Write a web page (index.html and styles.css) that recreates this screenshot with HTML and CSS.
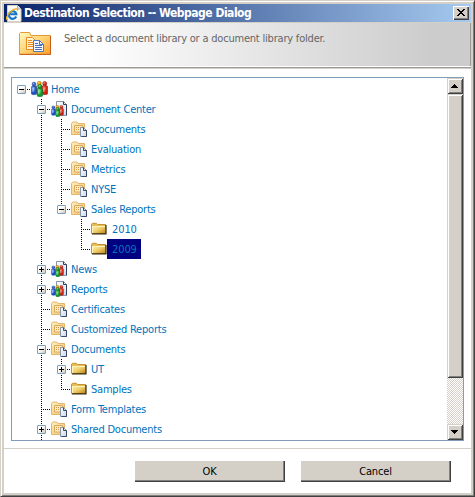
FILE: index.html
```html
<!DOCTYPE html>
<html lang="en">
<head>
<meta charset="utf-8">
<title>Destination Selection -- Webpage Dialog</title>
<link rel="stylesheet" href="styles.css">
</head>
<body>
<svg class="defs" aria-hidden="true">
  <defs>
    <linearGradient id="gold" x1="0" y1="0" x2="1" y2="1"><stop offset="0" stop-color="#fff3b0"/><stop offset=".5" stop-color="#f0cc68"/><stop offset="1" stop-color="#b98116"/></linearGradient>
    <linearGradient id="tan" x1="0" y1="0" x2="1" y2="1"><stop offset="0" stop-color="#fff0bd"/><stop offset="1" stop-color="#efc274"/></linearGradient>
    <linearGradient id="page" x1="0" y1="0" x2="1" y2="1"><stop offset="0" stop-color="#fff"/><stop offset="1" stop-color="#c9d6e8"/></linearGradient>
    <linearGradient id="big" x1="0" y1="0" x2="1" y2="1"><stop offset="0" stop-color="#fff8c0"/><stop offset=".5" stop-color="#ffd477"/><stop offset="1" stop-color="#ff9d29"/></linearGradient>
    <radialGradient id="red" cx=".35" cy=".3"><stop offset="0" stop-color="#ff8b70"/><stop offset="1" stop-color="#cf1f10"/></radialGradient>
    <radialGradient id="green" cx=".35" cy=".3"><stop offset="0" stop-color="#7be68a"/><stop offset="1" stop-color="#109a2c"/></radialGradient>
    <radialGradient id="blue" cx=".35" cy=".3"><stop offset="0" stop-color="#8bb8ff"/><stop offset="1" stop-color="#1f4fc0"/></radialGradient>
    <radialGradient id="yellow" cx=".35" cy=".3"><stop offset="0" stop-color="#ffe76a"/><stop offset="1" stop-color="#dd9a00"/></radialGradient>
  </defs>
  <symbol id="people" viewBox="0 0 17 16">
    <g stroke-width=".6">
      <g fill="url(#yellow)" stroke="#9c7000"><rect x="5.5" y="4" width="5.5" height="9" rx="1.5"/><circle cx="8.2" cy="2.2" r="1.9"/></g>
      <g fill="url(#blue)" stroke="#173a91"><rect x=".4" y="5" width="5.3" height="8.6" rx="1.5"/><circle cx="3" cy="3.1" r="1.9"/></g>
      <g fill="url(#red)" stroke="#8d150b"><rect x="11" y="4.6" width="5.6" height="9" rx="1.5"/><circle cx="13.7" cy="2.5" r="2"/></g>
      <g fill="url(#green)" stroke="#0a681d"><rect x="6.2" y="7.3" width="5.4" height="8.3" rx="1.5"/><circle cx="8.9" cy="5.4" r="2"/></g>
    </g>
    <path d="M2 7v4M7.8 9v4M12.8 7v4" stroke="#fff" stroke-opacity=".45" fill="none"/>
  </symbol>
  <symbol id="site" viewBox="0 0 16 16">
    <path d="M5.5.5h7l3 3v11h-10z" fill="url(#page)" stroke="#8795ab"/>
    <path d="M12.5.5v3h3v10.8" fill="#fff" fill-opacity=".5" stroke="#304060"/>
    <svg x="0" y="4" width="13" height="12" viewBox="0 0 17 16"><use href="#people" width="17" height="16"/></svg>
  </symbol>
  <symbol id="library" viewBox="0 0 16 16">
    <path d="M.5 13.5V2.3L1.8 1h4l1.4 1.5h6.3v11z" fill="url(#tan)" stroke="#e3b46a"/>
    <path d="M3.5 4.5h8v6.500h-8z" fill="#ffeab4" stroke="#dcaa5c"/>
    <path d="M5 6.5h1m1 0h1m1 0h1M5 8.5h1m1 0h1m1 0h1" stroke="#d09a4c"/>
    <path d="M9.5 6.5h3l3 3v6h-6z" fill="url(#page)" stroke="#8795ab"/>
    <path d="M12.5 6.5v3h3v6h-5" fill="none" stroke="#3b4866"/>
  </symbol>
  <symbol id="folder" viewBox="0 0 16 16">
    <path d="M.5 12.5V3.2l.9-.9h4l1.2 1.2h7.9v9z" fill="#e8bd55" stroke="#c39431"/>
    <path d="M1 5h13.5v7.5H1z" fill="url(#gold)"/>
    <path d="M1 12.9h14V4" fill="none" stroke="#33280c" stroke-width="1.2"/>
    <path d="M1.5 12V5.5H14" fill="none" stroke="#fff5bd"/>
  </symbol>
</svg>

<div class="window">
  <div class="titlebar">
    <svg class="ie" viewBox="0 0 16 17">
      <path d="M1.5.5h10l3.5 3.5v12.5H1.5z" fill="#fbfbf6" stroke="#d7d3c4"/>
      <path d="M11.5.5V4H15" fill="#ddd" stroke="#999" stroke-width=".7"/>
      <path d="M10.2 11.5A3.8 3.8 0 1 1 10.4 9.2H4.2" fill="none" stroke="#1675c9" stroke-width="2.1"/>
      <path d="M2 14.5C-1 15.5.4 10.6 4.3 7S12.3 2.6 11.3 5.8" fill="none" stroke="#e9ae24" stroke-width="1.3"/>
    </svg>
    <h1>Destination Selection -- Webpage Dialog</h1>
    <button class="close" aria-label="Close"><svg viewBox="0 0 8 7" shape-rendering="crispEdges"><path d="M0 0h2v1h1v1h2V1h1V0h2v1H7v1H6v1H5v1h1v1h1v1h1v1H6V6H5V5H3v1H2v1H0V6h1V5h1V4h1V3H2V2H1V1H0z"/></svg></button>
  </div>
  <div class="banner">
    <svg class="banner-icon" viewBox="0 0 32 23">
      <path d="M.5 22.3V1.5L1.5.5h9l1.5 3h19.5v18.8z" fill="url(#big)" stroke="#e59a36"/>
      <path d="M.5 22.4h31V4" fill="none" stroke="#c4601b"/>
      <path d="M7.5 5.5h6l3 3v9h-9z" fill="#fff1d2" stroke="#ec8b20"/>
      <path d="M9 8.5h4M9 10.5h5M9 12.5h5M9 14.5h5" stroke="#ec8b20"/>
      <path d="M14.5 8.5h6l4 4v7h-10z" fill="#f5f9ff" stroke="#5377bd"/>
      <path d="M20.5 8.5v4h4M16 11.5h3M16 13.5h7M16 15.5h7M16 17.5h7" fill="none" stroke="#4b70b8"/>
    </svg>
    <p>Select a document library or a document library folder.</p>
  </div>
  <div class="content">
    <div class="tree-box">
      <div class="tree">
        <div class="row"><i class="g root"><b></b></i><svg class="people"><use href="#people"/></svg><a>Home</a></div>
        <div class="row"><i class="g"></i><i class="g v h"><b></b></i><svg><use href="#site"/></svg><a>Document Center</a></div>
        <div class="row"><i class="g"></i><i class="g v"></i><i class="g v h"></i><svg><use href="#library"/></svg><a>Documents</a></div>
        <div class="row"><i class="g"></i><i class="g v"></i><i class="g v h"></i><svg><use href="#library"/></svg><a>Evaluation</a></div>
        <div class="row"><i class="g"></i><i class="g v"></i><i class="g v h"></i><svg><use href="#library"/></svg><a>Metrics</a></div>
        <div class="row"><i class="g"></i><i class="g v"></i><i class="g v h"></i><svg><use href="#library"/></svg><a>NYSE</a></div>
        <div class="row"><i class="g"></i><i class="g v"></i><i class="g end h"><b></b></i><svg><use href="#library"/></svg><a>Sales Reports</a></div>
        <div class="row"><i class="g"></i><i class="g v"></i><i class="g"></i><i class="g v h"></i><svg><use href="#folder"/></svg><a class="num">2010</a></div>
        <div class="row"><i class="g"></i><i class="g v"></i><i class="g"></i><i class="g end h"></i><svg><use href="#folder"/></svg><a class="num selected">2009</a></div>
        <div class="row"><i class="g"></i><i class="g v h"><b class="plus"></b></i><svg><use href="#site"/></svg><a>News</a></div>
        <div class="row"><i class="g"></i><i class="g v h"><b class="plus"></b></i><svg><use href="#site"/></svg><a>Reports</a></div>
        <div class="row"><i class="g"></i><i class="g v h"></i><svg><use href="#library"/></svg><a>Certificates</a></div>
        <div class="row"><i class="g"></i><i class="g v h"></i><svg><use href="#library"/></svg><a>Customized Reports</a></div>
        <div class="row"><i class="g"></i><i class="g v h"><b></b></i><svg><use href="#library"/></svg><a>Documents</a></div>
        <div class="row"><i class="g"></i><i class="g v"></i><i class="g v h"><b class="plus"></b></i><svg><use href="#folder"/></svg><a>UT</a></div>
        <div class="row"><i class="g"></i><i class="g v"></i><i class="g end h"></i><svg><use href="#folder"/></svg><a>Samples</a></div>
        <div class="row"><i class="g"></i><i class="g v h"></i><svg><use href="#library"/></svg><a>Form Templates</a></div>
        <div class="row"><i class="g"></i><i class="g v h"><b class="plus"></b></i><svg><use href="#library"/></svg><a>Shared Documents</a></div>
        <div class="row"><i class="g"></i><i class="g v"></i></div>
      </div>
      <div class="scrollbar">
        <div class="bevel arrow"><svg viewBox="0 0 7 4" shape-rendering="crispEdges"><path d="M3 0h1v1h1v1h1v1h1v1H0V3h1V2h1V1h1z"/></svg></div>
        <div class="bevel thumb"></div>
        <div class="track"></div>
        <div class="bevel arrow"><svg viewBox="0 0 7 4" shape-rendering="crispEdges"><path d="M0 0h7v1H6v1H5v1H4v1H3V3H2V2H1V1H0z"/></svg></div>
      </div>
    </div>
  </div>
  <div class="footer">
    <button>OK</button>
    <button>Cancel</button>
  </div>
</div>
</body>
</html>
```
FILE: styles.css
```css
* { box-sizing: border-box; }
body { margin: 0; font: 11px/20px "DejaVu Sans Condensed", "DejaVu Sans", sans-serif; font-stretch: condensed; }
.defs { position: absolute; width: 0; height: 0; }
.window {
  width: 475px; height: 497px; padding: 3px 3px 4px 3px; overflow: hidden;
  display: flex; flex-direction: column;
  background: #fff;
  border: 1px solid; border-color: #d4d0c8 #404040 #404040 #d4d0c8;
  box-shadow: inset 1px 1px #fff, inset -1px -1px #808080, inset 3px 3px #d4d0c8, inset -3px -3px #d4d0c8;
}
.titlebar {
  height: 18px; flex: none; display: flex; align-items: center; padding: 0 2px;
  background: linear-gradient(90deg, #0a246a, #a6caf0);
}
.ie { width: 16px; height: 17px; flex: none; }
h1 { margin: 0 auto 0 2px; font-size: 12px; line-height: 18px; font-weight: bold; color: #fff; white-space: nowrap; letter-spacing: -.49px; }
button { padding: 0; margin: 0; border: 0; font: inherit; color: #000; background: #d4d0c8; }
.close {
  width: 16px; height: 14px; display: flex; align-items: center; justify-content: center;
  box-shadow: inset 1px 1px #fff, inset -1px -1px #404040, inset -2px -2px #808080;
}
.close svg { width: 8px; height: 7px; margin: 0 1px 1px 0; }
.banner {
  height: 47px; flex: none; display: flex; align-items: flex-start; padding: 9px 0 0 15px;
  border-top: 1px solid #d4d0c8; border-bottom: 1px solid #d4d0c8;
  background: linear-gradient(#999, #999) 0 44px / 100% 1px no-repeat, linear-gradient(#fff, #fff) 0 43px / 100% 1px no-repeat, linear-gradient(#999, #999) 100% 0 / 1px 43px no-repeat, linear-gradient(90deg, #fff 18%, #ccc 92%);
}
.banner-icon { width: 32px; height: 23px; }
.banner p { margin: -2px 0 0 13px; line-height: 18px; font-size: 11px; color: #666; white-space: nowrap; letter-spacing: -.2px; }
.content { flex: none; height: 380px; padding: 8px 0 0 7px; border-bottom: 1px solid #d4d0c8; }
.tree-box { width: 453px; height: 364px; display: flex; border: 1px solid #7f9db9; overflow: hidden; }
.tree { flex: 1; height: 362px; padding-top: 1px; margin-left: -1px; overflow: hidden; }
.row { display: flex; height: 20px; align-items: center; }
.row svg { width: 16px; height: 16px; flex: none; }
.row .people { width: 17px; margin-right: -1px; }
.row a { height: 20px; padding: 1px 4px 0; line-height: 20px; color: #0072bc; white-space: nowrap; letter-spacing: -.22px; }
.row .num { padding-left: 5px; padding-right: 3px; letter-spacing: -.1px; }
.row .selected { width: 34px; background: #000080; }
.g { width: 20px; height: 20px; flex: none; display: flex; align-items: center; padding-left: 6px; background-repeat: no-repeat; --v: repeating-linear-gradient(#000 0 1px, transparent 1px 2px); --h: repeating-linear-gradient(90deg, #000 0 1px, transparent 1px 2px); }
.v { background-image: var(--v); background-size: 1px 20px; background-position: 10px 0; }
.v.h { background-image: var(--v), var(--h); background-size: 1px 20px, 10px 1px; background-position: 10px 0, 10px 10px; }
.end.h { background-image: var(--v), var(--h); background-size: 1px 11px, 10px 1px; background-position: 10px 0, 10px 10px; }
.root { background-image: var(--h); background-size: 10px 1px; background-position: 10px 10px; }
.g b {
  width: 9px; height: 9px; margin-top: 1px; border: 1px solid #7b9ebd; border-radius: 1px;
  background: linear-gradient(#000, #000) 1px 3px / 5px 1px no-repeat, linear-gradient(135deg, #fff 40%, #c9c6b8);
}
.g .plus { background: linear-gradient(#000, #000) 1px 3px / 5px 1px no-repeat, linear-gradient(#000, #000) 3px 1px / 1px 5px no-repeat, linear-gradient(135deg, #fff 40%, #c9c6b8); }
.scrollbar { width: 16px; display: flex; flex-direction: column; background: #d4d0c8; }
.bevel { background: #d4d0c8; box-shadow: inset 1px 1px #d4d0c8, inset -1px -1px #404040, inset 2px 2px #fff, inset -2px -2px #808080; }
.arrow { height: 16px; flex: none; display: flex; align-items: center; justify-content: center; }
.arrow svg { width: 7px; height: 4px; margin-right: 1px; }
.thumb { height: 284px; flex: none; }
.track { flex: 1; background: repeating-conic-gradient(#fff 0 25%, #d4d0c8 0 50%) 0 0 / 2px 2px; }
.footer { flex: 1; display: flex; gap: 15px; padding: 11px 0 0 130px; }
.footer button { width: 151px; height: 22px; padding-top: 1px; line-height: 20px; letter-spacing: -.15px; box-shadow: inset 1px 1px #fff, inset -1px -1px #404040, inset -2px -2px #808080; }
```
